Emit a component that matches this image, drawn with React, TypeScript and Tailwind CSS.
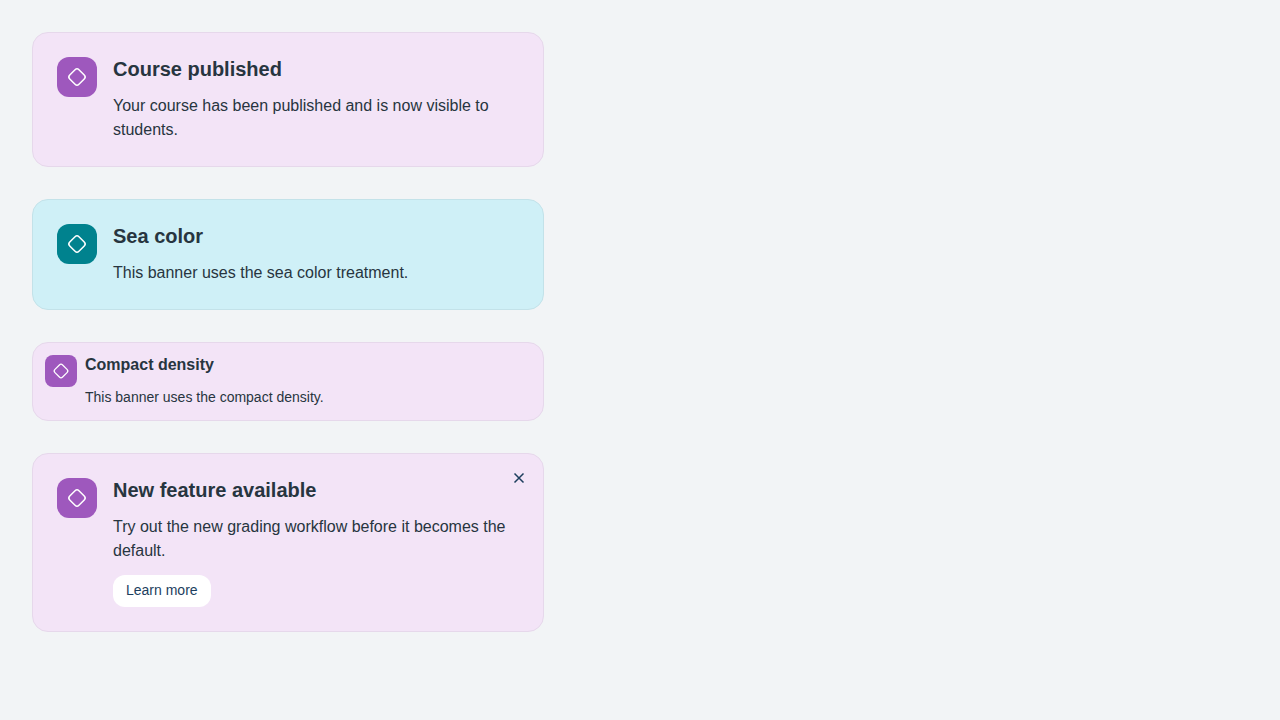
import { clsx } from "clsx"
import type { ReactNode } from "react"

interface BannerProps {
    title: string
    children: ReactNode
    color?: "violet" | "sea"
    compact?: boolean
    dismissible?: boolean
    action?: string
}

const DiamondIcon = ({ className }: { className: string }) => (
    <svg viewBox="0 0 24 24" fill="none" stroke="currentColor" className={className} aria-hidden="true">
        <rect x="5.5" y="5.5" width="13" height="13" rx="2.75" strokeWidth="1.5" transform="rotate(45 12 12)" />
    </svg>
)

const Banner = ({ title, children, color = "violet", compact, dismissible, action }: BannerProps) => {
    return (
        <section
            className={clsx(
                "relative flex rounded-2xl border",
                compact ? "gap-2 p-3" : "gap-4 p-6",
                color === "sea" ? "bg-[#cff0f7] border-[#c3e2e9]" : "bg-[#f3e4f7] border-[#e6d8eb]"
            )}
        >
            <div
                className={clsx(
                    "flex shrink-0 items-center justify-center text-white",
                    compact ? "size-8 rounded-lg" : "size-10 rounded-xl",
                    color === "sea" ? "bg-[#00828e]" : "bg-[#9e58bd]"
                )}
            >
                <DiamondIcon className={compact ? "size-5" : "size-6"} />
            </div>
            <div className="flex min-w-0 flex-1 flex-col items-start gap-3">
                <h2 className={clsx("font-bold", compact ? "text-base leading-5" : "text-xl leading-[25px]")}>
                    {title}
                </h2>
                <p className={compact ? "text-sm leading-[21px]" : "text-base leading-6"}>{children}</p>
                {action && (
                    <button type="button" className="h-8 rounded-xl bg-white px-[13px] pb-0.5 text-sm text-[#1d3e5e]">
                        {action}
                    </button>
                )}
            </div>
            {dismissible && (
                <button
                    type="button"
                    aria-label="Close"
                    className="absolute top-2 right-2 flex size-8 items-center justify-center text-[#1d3e5e]"
                >
                    <svg viewBox="0 0 16 16" fill="none" stroke="currentColor" strokeWidth="1.5" className="size-4">
                        <path d="M3.5 3.5l9 9M12.5 3.5l-9 9" />
                    </svg>
                </button>
            )}
        </section>
    )
}

const App = () => {
    return (
        <main className="min-h-screen bg-[#f2f4f6] p-8 font-['Liberation_Sans',sans-serif] text-[#273540]">
            <div className="flex max-w-lg flex-col gap-8">
                <Banner title="Course published">
                    Your course has been published and is now visible to students.
                </Banner>
                <Banner title="Sea color" color="sea">
                    This banner uses the sea color treatment.
                </Banner>
                <Banner title="Compact density" compact>
                    This banner uses the compact density.
                </Banner>
                <Banner title="New feature available" dismissible action="Learn more">
                    Try out the new grading workflow before it becomes the default.
                </Banner>
            </div>
        </main>
    )
}

export default App
